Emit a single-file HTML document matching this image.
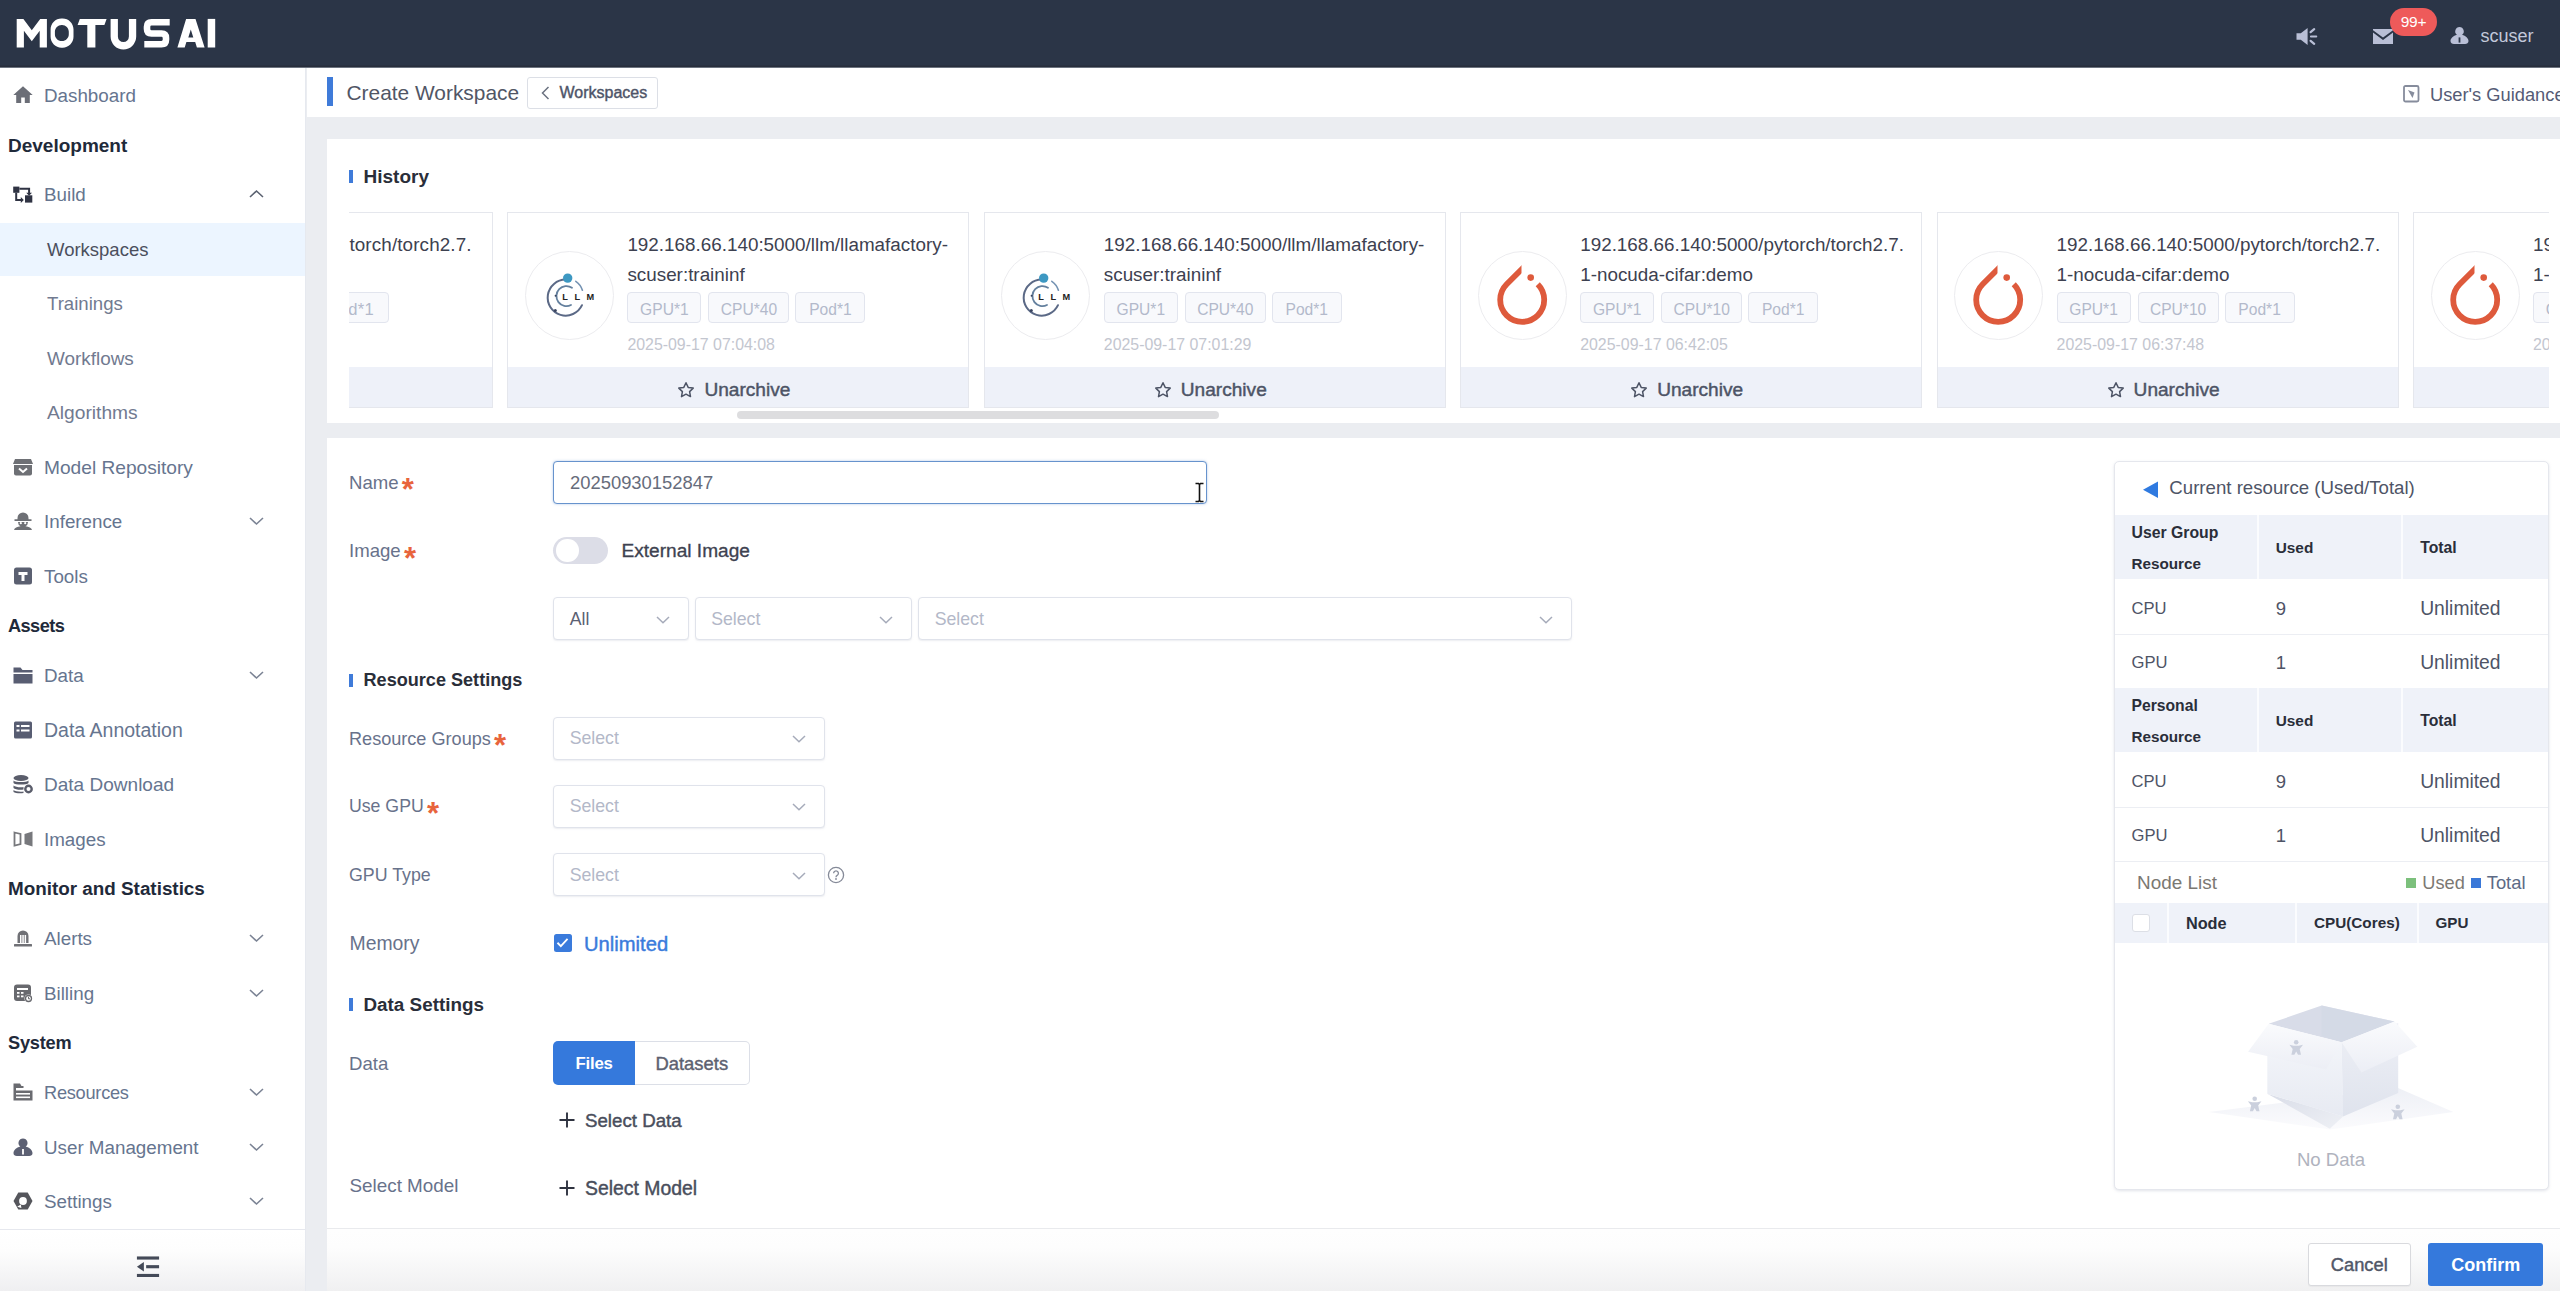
<!DOCTYPE html>
<html>
<head>
<meta charset="utf-8">
<title>Create Workspace</title>
<style>
*{box-sizing:border-box;margin:0;padding:0}
html,body{width:2560px;height:1291px;overflow:hidden;background:#ebedf1}
body{font-family:"Liberation Sans",sans-serif;color:#4e5969;position:relative;font-size:18.8px}
.abs{position:absolute}
.t{position:absolute;white-space:nowrap;line-height:1;transform:translateY(-50%)}
svg{display:block}

/* top bar */
#top{position:absolute;left:0;top:0;width:2560px;height:68px;background:linear-gradient(#2b3547 0,#2b3547 65px,#272d3b 66px,#272d3b 67px,#6d7480 67px,#6d7480 68px);z-index:5}

/* sidebar */
#side{position:absolute;left:0;top:67px;width:306px;height:1224px;background:#fff;border-right:1px solid #e6e9ef}
.mi{position:absolute;left:44px;white-space:nowrap;line-height:1;transform:translateY(-50%);color:#66758f;font-size:18.8px}
.mi.sub{left:47px}
.mh{position:absolute;left:8px;white-space:nowrap;line-height:1;transform:translateY(-50%);color:#1f2a3a;font-weight:700;font-size:19px}
.ic{position:absolute;left:12px;width:22px;height:22px;transform:translateY(-50%)}
.chev{position:absolute;left:249px;width:15px;height:9px;transform:translateY(-50%)}

/* main */
#phead{position:absolute;left:307px;top:67px;width:2253px;height:50px;background:#fff}
#hist{position:absolute;left:327px;top:140px;width:2233px;height:282.500px;background:#fff;box-shadow:0 -1px 0 #fff}
#form{position:absolute;left:327px;top:438px;width:2233px;height:790px;background:#fff}
#foot{position:absolute;left:327px;top:1228px;width:2233px;height:63px;background:linear-gradient(#fefefe 0,#fdfdfd 30%,#f0f0f1 100%);border-top:1px solid #e9eaed}

/* history */
.sec{position:absolute;width:4px;height:13px;background:#3f7bd9}
.sect{position:absolute;white-space:nowrap;line-height:1;transform:translateY(-50%);font-weight:700;color:#2a2e39;font-size:19px}
#cards{position:absolute;left:22px;top:72px;width:2199.800px;height:197px;overflow:hidden}
.card{position:absolute;top:.400px;width:462px;height:195.200px;border:1px solid #e5e7ed;background:#fff}
.card .cf{position:absolute;left:0;right:0;top:153.600px;bottom:0;background:#eef1f9}
.card .circ{position:absolute;left:16.500px;top:37.400px;width:89px;height:89px;border:1.600px solid #ececef;border-radius:50%}
.card .ttl{position:absolute;left:119px;top:16.800px;font-size:18.850px;line-height:30px;color:#3d4150;white-space:nowrap}
.tag{position:absolute;top:78.400px;height:31.400px;padding-top:3.800px;border:1px solid #e2e5ee;border-radius:4px;background:#f8f9fc;color:#b3b9cb;font-size:15.600px;line-height:25.600px;text-align:center}
.card .dt{position:absolute;left:119px;top:131.400px;font-size:15.900px;line-height:1;transform:translateY(-50%);color:#c3c6cf;white-space:nowrap}
.card .ua{position:absolute;left:196px;top:176.300px;font-size:19.100px;line-height:1;transform:translateY(-50%);color:#4d5466;white-space:nowrap;-webkit-text-stroke:.45px #4d5466}
.card .star{position:absolute;left:169px;top:167.300px}

/* form (coords relative to #form at 327,438) */
.sb{-webkit-text-stroke:.42px currentColor}
.lb{position:absolute;left:22px;white-space:nowrap;line-height:1;transform:translateY(-50%);color:#68728b;font-size:18.300px}
.lb i{font-style:normal;color:#e8643c;font-weight:700;font-size:31px;line-height:1;position:absolute;left:100%;margin-left:3.200px;top:50%;margin-top:-8.800px}
.sel{position:absolute;height:43px;border:1px solid #e0e3eb;border-radius:4px;background:#fff;box-shadow:0 1px 1.500px rgba(200,204,216,.35)}
.sel span{position:absolute;left:15.700px;top:calc(50% + 1.300px);transform:translateY(-50%);line-height:1;font-size:17.700px;color:#b3b8c8;white-space:nowrap}
.sel svg{position:absolute;right:18px;top:17.500px}

/* resource panel (origin 2114,461) */
#panel{position:absolute;left:1787px;top:22.500px;width:435px;height:729.500px;border:1px solid #e5e7ed;border-radius:5px;background:#fff;box-shadow:0 1px 3px rgba(150,158,180,.28);overflow:hidden}
#panel .hd{position:absolute;left:0;width:433px;background:#eff2f9}
#panel .vs{position:absolute;width:2px;background:#fbfcfe}
#panel .hl{position:absolute;left:0;width:433px;height:1px;background:#eceef3}
#panel .th{position:absolute;white-space:nowrap;line-height:1;transform:translateY(-50%);font-weight:700;color:#2a2e39;font-size:15.600px}
#panel .td{position:absolute;white-space:nowrap;line-height:1;transform:translateY(-50%);color:#4e5466;font-size:18.500px}
</style>
</head>
<body>

<div id="top">
<svg class="abs" style="left:0;top:0" width="240" height="67" viewBox="0 0 240 67">
 <g fill="#fff">
  <path d="M16.700 47.500V18.900h6.700l8.400 11.300 8.400-11.300h6.700v28.600h-7.200V30.800l-7.900 10.500-7.900-10.500v16.700z"/>
  <path fill-rule="evenodd" d="M61.500 18.400h1.100c6 0 10.900 4.900 10.900 10.900v7.500c0 6-4.900 10.900-10.900 10.900h-1.100c-6 0-10.900-4.900-10.900-10.900v-7.500c0-6 4.900-10.900 10.900-10.900zM61.700 24.900c-3.800 0-6.800 3-6.800 6.800v2.500c0 3.800 3 6.800 6.800 6.800h.300c3.800 0 6.800-3 6.800-6.800v-2.500c0-3.800-3-6.800-6.800-6.800z"/>
  <path d="M79.800 18.900h26.800l-2.200 6.100h-9v22.500h-8.100V25h-9.700z"/>
  <path fill-rule="evenodd" d="M177.400 47.500L186.100 18.900h9.400l9.100 28.600h-7.700l-1.700-5.500h-8.800l-1.700 5.500zM190.800 29.500l2.500 8.100h-5z"/>
  <rect x="207.700" y="18.900" width="7.500" height="28.600"/>
 </g>
 <g fill="none" stroke="#fff">
  <path d="M114.250 18.900V36.600a9.150 9.150 0 0 0 18.300 0V18.900" stroke-width="7.300"/>
  <path d="M169.700 22.200H151.500q-4.500 0-4.500 4.500v2.250q0 4.500 4.500 4.500h10q4.500 0 4.500 4.500v1.800q0 4.450-4.500 4.450H144.300" stroke-width="6.600"/>
 </g>
</svg>
<!-- speaker -->
<svg class="abs" style="left:2296px;top:27px" width="22" height="19" viewBox="0 0 22 19">
 <path fill="#b9bfd6" d="M0.5 6.3h4.3L11.6 1v17L4.8 12.7H0.5z"/>
 <g stroke="#b9bfd6" stroke-width="2.2" stroke-linecap="round"><path d="M15 9.5h5.2M14.6 5.2l3.6-3M14.6 13.8l3.6 3"/></g>
</svg>
<!-- mail -->
<svg class="abs" style="left:2373px;top:29px" width="20" height="15" viewBox="0 0 20 15">
 <path fill="#b9bfd6" d="M0 0h20v1.2L10 8.6 0 1.2zM0 3.4l10 7.5 10-7.5V15H0z"/>
</svg>
<div class="abs" style="left:2390px;top:8px;width:47px;height:28px;border-radius:14px;background:#ee5a5a;color:#fff;font-size:15.5px;line-height:28px;text-align:center;letter-spacing:-0.3px">99+</div>
<!-- user -->
<svg class="abs" style="left:2450px;top:27px" width="19" height="17" viewBox="0 0 19 17">
 <path fill="#b9bfd6" d="M9.5 0a4.3 4.3 0 0 1 2.6 7.7c3.6.9 6.4 3.6 6.4 6.4 0 2-1.6 2.9-3.4 2.9H3.9C2.100 17 .5 16.100 .5 14.100c0-2.800 2.800-5.500 6.400-6.400A4.300 4.300 0 0 1 9.500 0z"/>
 <rect x="8.6" y="10.4" width="1.8" height="5.2" fill="#2b3547"/>
</svg>
<div class="t" style="left:2480.5px;top:36px;color:#c3c8da;font-size:18px">scuser</div>
</div>
<div id="side">
<div class="abs" style="left:0;top:156px;width:305px;height:53px;background:#ecf5ff"></div>
<svg class="ic" style="top:28px;left:12px" width="22" height="22" viewBox="0 0 22 22"><path fill="#6b6e77" d="M11 2.300L1.300 11h2.900v8h5v-5.600h3.600V19h5v-8h2.900z"/></svg><div class="mi" style="top:28.5px;">Dashboard</div>
<div class="mh" style="top:77.8px;">Development</div>
<svg class="ic" style="top:127px;left:12px" width="22" height="22" viewBox="0 0 22 22"><g fill="#2f3343"><rect x="1.200" y="3.600" width="6.200" height="6.200"/><rect x="13" y="12.300" width="7.300" height="7.300"/><path d="M7.400 4.800h10.700v5h1.900l-2.900 3-2.900-3h1.900V6.800H7.400zM3.200 9.800h2v6.200h3.600v-1.900l3 2.900-3 2.900V18H3.200z"/></g></svg><div class="mi" style="top:127.5px;">Build</div><svg class="chev" style="top:127px" width="15" height="9" viewBox="0 0 15 9"><path d="M1 7.500l6.500-6 6.500 6" fill="none" stroke="#5a6170" stroke-width="1.600"/></svg>
<div class="mi sub" style="top:182.5px;color:#4b4f5d;font-size:18.500px">Workspaces</div>
<div class="mi sub" style="top:236.5px;color:#717a90;font-size:18.600px">Trainings</div>
<div class="mi sub" style="top:291.5px;color:#717a90;font-size:18.900px">Workflows</div>
<div class="mi sub" style="top:345.5px;color:#717a90;font-size:19.200px">Algorithms</div>
<svg class="ic" style="top:400px;left:12px" width="22" height="22" viewBox="0 0 22 22"><g fill="#6e7075"><path d="M3 3h16l2 5H1z"/><path d="M2 9h18v8.500a2 2 0 0 1-2 2H4a2 2 0 0 1-2-2z"/></g><path d="M7 12.500l4 3.500 4-3.500" fill="none" stroke="#fff" stroke-width="2"/></svg><div class="mi" style="top:400.5px;font-size:19.150px">Model Repository</div>
<svg class="ic" style="top:454px;left:12px" width="22" height="22" viewBox="0 0 22 22"><g fill="#6e7075"><path d="M5.500 8a5.500 5.500 0 0 1 11 0v1.200h3v1.800h-17V9.200h3z"/><path d="M6 12h10a5 5 0 0 1-2.500 4.300c3.400.4 6 1.700 6.500 3.700H2c.5-2 3.100-3.300 6.500-3.700A5 5 0 0 1 6 12z"/></g><circle cx="8.800" cy="13.200" r="1.100" fill="#fff"/><circle cx="13.200" cy="13.200" r="1.100" fill="#fff"/></svg><div class="mi" style="top:454.5px;">Inference</div><svg class="chev" style="top:454px" width="15" height="9" viewBox="0 0 15 9"><path d="M1 1.500l6.500 6 6.500-6" fill="none" stroke="#7b8394" stroke-width="1.600"/></svg>
<svg class="ic" style="top:509px;left:12px" width="22" height="22" viewBox="0 0 22 22"><rect x="2" y="2.500" width="18" height="17" rx="2.500" fill="#5b6071"/><path d="M6.500 7h9v3h-3v6h-3v-6h-3z" fill="#fff"/></svg><div class="mi" style="top:509.5px;">Tools</div>
<div class="mh" style="top:558.8px;font-size:18.200px;letter-spacing:-.570px">Assets</div>
<svg class="ic" style="top:608px;left:12px" width="22" height="22" viewBox="0 0 22 22"><path fill="#585d72" d="M1.500 3.500h7l2 2.500h10v2.500h-19zM1.500 10h19v9.500h-19z"/></svg><div class="mi" style="top:608.5px;">Data</div><svg class="chev" style="top:608px" width="15" height="9" viewBox="0 0 15 9"><path d="M1 1.500l6.500 6 6.500-6" fill="none" stroke="#7b8394" stroke-width="1.600"/></svg>
<svg class="ic" style="top:663px;left:12px" width="22" height="22" viewBox="0 0 22 22"><rect x="2" y="2.500" width="18" height="17" rx="1.500" fill="#585d72"/><g fill="#fff"><rect x="4.500" y="6" width="3" height="2"/><rect x="9" y="6" width="8.500" height="2"/><rect x="4.500" y="10.500" width="3" height="2"/><rect x="9" y="10.500" width="8.500" height="2"/></g></svg><div class="mi" style="top:663.5px;font-size:19.500px">Data Annotation</div>
<svg class="ic" style="top:717px;left:12px" width="22" height="22" viewBox="0 0 22 22"><g fill="#5a5d6b"><ellipse cx="9" cy="5" rx="7.500" ry="3"/><path d="M1.500 7.500c1.500 2 13.500 2 15 0V10c-1.500 2-13.500 2-15 0zM1.500 12.500c1.500 1.800 8 2 10 1.500v2.500c-3 .6-8.500.3-10-1.500zM1.500 17c1.500 1.600 7 2 10 1.500V20c-3 .6-8.500.3-10-1z"/></g><circle cx="16.500" cy="16" r="3.200" fill="none" stroke="#5a5d6b" stroke-width="2.400"/></svg><div class="mi" style="top:717.5px;font-size:19.050px">Data Download</div>
<svg class="ic" style="top:772px;left:12px" width="22" height="22" viewBox="0 0 22 22"><path d="M2.500 4.500l6 1.500v10l-6 1.500z" fill="none" stroke="#77787c" stroke-width="1.800"/><path d="M20.500 3.500l-8 2.500v10l8 2.500z" fill="#77787c"/></svg><div class="mi" style="top:772.5px;">Images</div>
<div class="mh" style="top:821.8px;font-size:18.850px">Monitor and Statistics</div>
<svg class="ic" style="top:871px;left:12px" width="22" height="22" viewBox="0 0 22 22"><g fill="#707176"><path d="M5.500 16V9a5.500 5.500 0 0 1 11 0v7z"/><rect x="2" y="17" width="18" height="2.500" rx=".5"/></g><g fill="#fff"><rect x="8" y="8" width="1.500" height="8"/><rect x="10.300" y="8" width="1.500" height="8"/><rect x="12.600" y="8" width="1.500" height="8"/></g></svg><div class="mi" style="top:871.5px;">Alerts</div><svg class="chev" style="top:871px" width="15" height="9" viewBox="0 0 15 9"><path d="M1 1.500l6.500 6 6.500-6" fill="none" stroke="#7b8394" stroke-width="1.600"/></svg>
<svg class="ic" style="top:926px;left:12px" width="22" height="22" viewBox="0 0 22 22"><rect x="2" y="2.500" width="17" height="16.500" rx="3" fill="#68696e"/><g fill="#fff"><rect x="5" y="6" width="11" height="2"/><rect x="5" y="10" width="2.500" height="1.800"/><rect x="9" y="10" width="2.500" height="1.800"/><rect x="5" y="13.500" width="2.500" height="1.800"/><rect x="9" y="13.500" width="2.500" height="1.800"/></g><circle cx="16.500" cy="16.500" r="4" fill="#fff"/><circle cx="16.500" cy="16.500" r="3" fill="none" stroke="#68696e" stroke-width="1.300"/><path d="M16.500 14.800v2h1.500" fill="none" stroke="#68696e" stroke-width="1"/></svg><div class="mi" style="top:926.5px;">Billing</div><svg class="chev" style="top:926px" width="15" height="9" viewBox="0 0 15 9"><path d="M1 1.500l6.500 6 6.500-6" fill="none" stroke="#7b8394" stroke-width="1.600"/></svg>
<div class="mh" style="top:975.8px;font-size:18.200px;letter-spacing:-.200px">System</div>
<svg class="ic" style="top:1025px;left:12px" width="22" height="22" viewBox="0 0 22 22"><path fill="#6a6b70" d="M1.500 2.500h6.500l1.500 2.500h2v2h-7.500v2.500h16.500v10h-19z"/><g fill="#fff"><rect x="4" y="12" width="14" height="1.600"/><rect x="4" y="15.500" width="14" height="1.600"/></g></svg><div class="mi" style="top:1025.5px;font-size:18.200px;letter-spacing:-.250px">Resources</div><svg class="chev" style="top:1025px" width="15" height="9" viewBox="0 0 15 9"><path d="M1 1.500l6.500 6 6.500-6" fill="none" stroke="#7b8394" stroke-width="1.600"/></svg>
<svg class="ic" style="top:1080px;left:12px" width="22" height="22" viewBox="0 0 22 22"><path fill="#5c6073" d="M11 2.500a4.500 4.500 0 0 1 2.700 8.100c3.800.900 6.800 3.800 6.800 6.700 0 1.700-1.500 2.700-3.300 2.700H4.800c-1.800 0-3.300-1-3.300-2.700 0-2.900 3-5.800 6.800-6.700A4.500 4.500 0 0 1 11 2.500z"/><rect x="10.100" y="13" width="1.800" height="5.500" fill="#fff"/></svg><div class="mi" style="top:1080.5px;">User Management</div><svg class="chev" style="top:1080px" width="15" height="9" viewBox="0 0 15 9"><path d="M1 1.500l6.500 6 6.500-6" fill="none" stroke="#7b8394" stroke-width="1.600"/></svg>
<svg class="ic" style="top:1134px;left:12px" width="22" height="22" viewBox="0 0 22 22"><path d="M6.300 2.600h9.400l4.800 8.400-4.800 8.400H6.300L1.500 11z" fill="#55565c"/><circle cx="11" cy="11" r="3.900" fill="#fff"/><path d="M5.200 16.800l3.600-2.400.600 3.600z" fill="#fff"/></svg><div class="mi" style="top:1134.5px;">Settings</div><svg class="chev" style="top:1134px" width="15" height="9" viewBox="0 0 15 9"><path d="M1 1.500l6.500 6 6.500-6" fill="none" stroke="#7b8394" stroke-width="1.600"/></svg>
<div class="abs" style="left:0;top:1162px;width:305px;height:62px;background:linear-gradient(#fff 0,#fdfdfd 35%,#efeff1 100%);border-top:1px solid #e6e8ee"></div>
<svg class="abs" style="left:135.500px;top:1188.500px" width="24" height="21.500" viewBox="0 0 26 24" preserveAspectRatio="none"><g fill="#444a58"><rect x="1" y=".500" width="24" height="3.500"/><rect x="11" y="10.200" width="14" height="3.500"/><rect x="1" y="20" width="24" height="3.500"/><path d="M1 12l7.500-5.200v10.400z"/></g></svg>
</div>
<div id="phead">
<div class="abs" style="left:20px;top:10px;width:6px;height:29px;background:#3f7bd9"></div>
<div class="t" style="left:39.500px;top:26px;font-size:20.900px;color:#515665">Create Workspace</div>
<div class="abs" style="left:220px;top:9.500px;width:131px;height:32px;border:1px solid #dcdfe6;border-radius:3px;background:#fff"></div>
<svg class="abs" style="left:234px;top:19px" width="9" height="14" viewBox="0 0 9 14"><path d="M7.5 1L1.5 7l6 6" fill="none" stroke="#6b7280" stroke-width="1.5"/></svg>
<div class="t" style="left:252.500px;top:26px;font-size:16px;color:#4e5468;-webkit-text-stroke:.4px #4e5468">Workspaces</div>
<svg class="abs" style="left:2096px;top:18px" width="17" height="18" viewBox="0 0 17 18"><rect x="1" y="1" width="14.500" height="15.500" rx="1.500" fill="none" stroke="#868c9c" stroke-width="1.800"/><path d="M5 5l6.500 2.500-2 5.500z" fill="#868c9c"/></svg>
<div class="t" style="left:2123px;top:27.500px;font-size:18.300px;color:#555b75">User's Guidance</div>
</div>
<div id="hist">
<div class="sec" style="left:22px;top:29.500px"></div><div class="sect" style="left:36.500px;top:36px">History</div>
<div id="cards">
<div class="card" style="left:-318.0px">
<div class="ttl" style="left:317.400px;letter-spacing:.12px">torch/torch2.7.</div>
<div class="tag" style="left:287px;width:69.500px;text-align:right;padding-right:13.500px;font-size:16.600px;letter-spacing:.3px">d*1</div>
<div class="cf"></div>
</div>
<div class="card" style="left:158.4px">
<div class="circ"><svg class="abs" style="left:0;top:0" width="89" height="89" viewBox="0 0 89 89">
<g fill="none" stroke-linecap="round">
<path d="M39.800 27.600A18 18 0 1 0 56 53.200" stroke="#5b6986" stroke-width="2"/>
<path d="M49.800 29.300q5 3.400 6.600 9" stroke="#7593b3" stroke-width="1.600"/>
<path d="M46 35.800A10 10 0 1 0 45 53" stroke="#64809e" stroke-width="1.800"/>
</g>
<circle cx="41.700" cy="26.100" r="4.700" fill="#3d98c2"/>
<circle cx="29.300" cy="58.500" r="1.500" fill="#3a4560"/><circle cx="29.600" cy="43.800" r="1" fill="#3a4560"/>
<text x="36.200" y="47.500" font-family="Liberation Sans" font-weight="700" font-size="9.200" letter-spacing="6.600" fill="#222">LLM</text>
</svg></div>
<div class="ttl">192.168.66.140:5000/llm/llamafactory-<br>scuser:traininf</div>
<div class="tag" style="left:119px;width:74px">GPU*1</div><div class="tag" style="left:200px;width:81px">CPU*40</div><div class="tag" style="left:287px;width:70px">Pod*1</div>
<div class="dt">2025-09-17 07:04:08</div>
<div class="cf"></div><svg class="star" width="18" height="18" viewBox="0 0 18 18"><path d="M9 1.800l2.200 4.600 5 .700-3.600 3.500.900 5-4.500-2.400-4.500 2.400.900-5L1.800 7.100l5-.700z" fill="none" stroke="#4d5466" stroke-width="1.500" stroke-linejoin="round"/></svg><div class="ua">Unarchive</div>
</div>
<div class="card" style="left:634.8px">
<div class="circ"><svg class="abs" style="left:0;top:0" width="89" height="89" viewBox="0 0 89 89">
<g fill="none" stroke-linecap="round">
<path d="M39.800 27.600A18 18 0 1 0 56 53.200" stroke="#5b6986" stroke-width="2"/>
<path d="M49.800 29.300q5 3.400 6.600 9" stroke="#7593b3" stroke-width="1.600"/>
<path d="M46 35.800A10 10 0 1 0 45 53" stroke="#64809e" stroke-width="1.800"/>
</g>
<circle cx="41.700" cy="26.100" r="4.700" fill="#3d98c2"/>
<circle cx="29.300" cy="58.500" r="1.500" fill="#3a4560"/><circle cx="29.600" cy="43.800" r="1" fill="#3a4560"/>
<text x="36.200" y="47.500" font-family="Liberation Sans" font-weight="700" font-size="9.200" letter-spacing="6.600" fill="#222">LLM</text>
</svg></div>
<div class="ttl">192.168.66.140:5000/llm/llamafactory-<br>scuser:traininf</div>
<div class="tag" style="left:119px;width:74px">GPU*1</div><div class="tag" style="left:200px;width:81px">CPU*40</div><div class="tag" style="left:287px;width:70px">Pod*1</div>
<div class="dt">2025-09-17 07:01:29</div>
<div class="cf"></div><svg class="star" width="18" height="18" viewBox="0 0 18 18"><path d="M9 1.800l2.200 4.600 5 .700-3.600 3.500.900 5-4.500-2.400-4.500 2.400.900-5L1.800 7.100l5-.700z" fill="none" stroke="#4d5466" stroke-width="1.500" stroke-linejoin="round"/></svg><div class="ua">Unarchive</div>
</div>
<div class="card" style="left:1111.2px">
<div class="circ"><svg class="abs" style="left:0;top:0" width="89" height="89" viewBox="0 0 89 89">
<defs><clipPath id="CP3"><rect x="0" y="0" width="43.800" height="89"/><rect x="43.800" y="30" width="46" height="59"/></clipPath></defs>
<g transform="translate(-1.300,-1.400)"><path d="M48 14.600L28.940 33.640A22 22 0 1 0 60.060 33.640" fill="none" stroke="#de5a3c" stroke-width="5.800" clip-path="url(#CP3)"/>
<circle cx="53" cy="27" r="3.300" fill="#de5a3c"/>
</g></svg></div>
<div class="ttl">192.168.66.140:5000/pytorch/torch2.7.<br>1-nocuda-cifar:demo</div>
<div class="tag" style="left:119px;width:74px">GPU*1</div><div class="tag" style="left:200px;width:81px">CPU*10</div><div class="tag" style="left:287px;width:70px">Pod*1</div>
<div class="dt">2025-09-17 06:42:05</div>
<div class="cf"></div><svg class="star" width="18" height="18" viewBox="0 0 18 18"><path d="M9 1.800l2.200 4.600 5 .700-3.600 3.500.900 5-4.500-2.400-4.500 2.400.900-5L1.800 7.100l5-.700z" fill="none" stroke="#4d5466" stroke-width="1.500" stroke-linejoin="round"/></svg><div class="ua">Unarchive</div>
</div>
<div class="card" style="left:1587.6px">
<div class="circ"><svg class="abs" style="left:0;top:0" width="89" height="89" viewBox="0 0 89 89">
<defs><clipPath id="CP4"><rect x="0" y="0" width="43.800" height="89"/><rect x="43.800" y="30" width="46" height="59"/></clipPath></defs>
<g transform="translate(-1.300,-1.400)"><path d="M48 14.600L28.940 33.640A22 22 0 1 0 60.060 33.640" fill="none" stroke="#de5a3c" stroke-width="5.800" clip-path="url(#CP4)"/>
<circle cx="53" cy="27" r="3.300" fill="#de5a3c"/>
</g></svg></div>
<div class="ttl">192.168.66.140:5000/pytorch/torch2.7.<br>1-nocuda-cifar:demo</div>
<div class="tag" style="left:119px;width:74px">GPU*1</div><div class="tag" style="left:200px;width:81px">CPU*10</div><div class="tag" style="left:287px;width:70px">Pod*1</div>
<div class="dt">2025-09-17 06:37:48</div>
<div class="cf"></div><svg class="star" width="18" height="18" viewBox="0 0 18 18"><path d="M9 1.800l2.200 4.600 5 .700-3.600 3.500.900 5-4.500-2.400-4.500 2.400.900-5L1.800 7.100l5-.700z" fill="none" stroke="#4d5466" stroke-width="1.500" stroke-linejoin="round"/></svg><div class="ua">Unarchive</div>
</div>
<div class="card" style="left:2064.0px">
<div class="circ"><svg class="abs" style="left:0;top:0" width="89" height="89" viewBox="0 0 89 89">
<defs><clipPath id="CP5"><rect x="0" y="0" width="43.800" height="89"/><rect x="43.800" y="30" width="46" height="59"/></clipPath></defs>
<g transform="translate(-1.300,-1.400)"><path d="M48 14.600L28.940 33.640A22 22 0 1 0 60.060 33.640" fill="none" stroke="#de5a3c" stroke-width="5.800" clip-path="url(#CP5)"/>
<circle cx="53" cy="27" r="3.300" fill="#de5a3c"/>
</g></svg></div>
<div class="ttl">192.168.66.140:5000/pytorch/torch2.7.<br>1-nocuda-cifar:demo</div>
<div class="tag" style="left:119px;width:74px">GPU*1</div><div class="tag" style="left:200px;width:81px">CPU*10</div><div class="tag" style="left:287px;width:70px">Pod*1</div>
<div class="dt">2025-09-17 06:30:12</div>
<div class="cf"></div><svg class="star" width="18" height="18" viewBox="0 0 18 18"><path d="M9 1.800l2.200 4.600 5 .700-3.600 3.500.900 5-4.500-2.400-4.500 2.400.900-5L1.800 7.100l5-.700z" fill="none" stroke="#4d5466" stroke-width="1.500" stroke-linejoin="round"/></svg><div class="ua">Unarchive</div>
</div>
</div>
<div class="abs" style="left:410px;top:271px;width:482px;height:8px;border-radius:4px;background:#dddddf"></div>
</div>
<div id="form">
<div class="lb" style="top:44.5px;font-size:18.6px;">Name<i>*</i></div>
<div class="abs" style="left:226px;top:22.500px;width:654px;height:43px;border:1.600px solid #6793cd;border-radius:4px;background:#fff;box-shadow:0 0 2.500px rgba(103,147,205,.55)"></div>
<div class="t" style="left:243px;top:44.500px;font-size:18.400px;color:#666c7b">20250930152847</div>
<svg class="abs" style="left:867px;top:44px" width="11" height="21" viewBox="0 0 11 21"><path d="M1.500 1.500h3l1 1 1-1h3M5.500 2.500v16M1.500 19.500h3l1-1 1 1h3" fill="none" stroke="#111" stroke-width="1.600"/></svg>
<div class="lb" style="top:113px;font-size:18.6px;">Image<i>*</i></div>
<div class="abs" style="left:226px;top:98.500px;width:55px;height:27.500px;border-radius:14px;background:#dcdde7"></div><div class="abs" style="left:229px;top:101px;width:22.500px;height:22.500px;border-radius:50%;background:#fff"></div>
<div class="t sb" style="left:294.500px;top:113px;font-size:19.100px;color:#3e4250;-webkit-text-stroke-width:.32px">External Image</div>
<div class="sel" style="left:226px;top:159px;width:136px"><span style="color:#5b6173">All</span><svg width="14" height="8" viewBox="0 0 14 8"><path d="M1 1l6 5.800L13 1" fill="none" stroke="#a6abba" stroke-width="1.500"/></svg></div>
<div class="sel" style="left:367.500px;top:159px;width:217.500px"><span>Select</span><svg width="14" height="8" viewBox="0 0 14 8"><path d="M1 1l6 5.800L13 1" fill="none" stroke="#a6abba" stroke-width="1.500"/></svg></div>
<div class="sel" style="left:591px;top:159px;width:654px"><span>Select</span><svg width="14" height="8" viewBox="0 0 14 8"><path d="M1 1l6 5.800L13 1" fill="none" stroke="#a6abba" stroke-width="1.500"/></svg></div>
<div class="sec" style="left:22px;top:235.500px"></div><div class="sect" style="left:36.500px;top:242px;font-size:18.100px">Resource Settings</div>
<div class="lb" style="top:300.5px;font-size:18.1px;">Resource Groups<i>*</i></div>
<div class="sel" style="left:226px;top:278.7px;width:272px"><span>Select</span><svg width="14" height="8" viewBox="0 0 14 8"><path d="M1 1l6 5.800L13 1" fill="none" stroke="#a6abba" stroke-width="1.500"/></svg></div>
<div class="lb" style="top:369px;font-size:17.700px;">Use GPU<i>*</i></div>
<div class="sel" style="left:226px;top:346.7px;width:272px"><span>Select</span><svg width="14" height="8" viewBox="0 0 14 8"><path d="M1 1l6 5.800L13 1" fill="none" stroke="#a6abba" stroke-width="1.500"/></svg></div>
<div class="lb" style="top:437.800px;font-size:17.800px;">GPU Type</div>
<div class="sel" style="left:226px;top:415.2px;width:272px"><span>Select</span><svg width="14" height="8" viewBox="0 0 14 8"><path d="M1 1l6 5.800L13 1" fill="none" stroke="#a6abba" stroke-width="1.500"/></svg></div>
<svg class="abs" style="left:499.500px;top:428px" width="18" height="18" viewBox="0 0 18 18"><circle cx="9" cy="9" r="7.600" fill="none" stroke="#858a98" stroke-width="1.300"/><path d="M6.600 7.300a2.400 2.400 0 1 1 3.600 2.100c-.800.500-1.200.900-1.200 1.800" fill="none" stroke="#858a98" stroke-width="1.300"/><circle cx="9" cy="13" r=".900" fill="#858a98"/></svg>
<div class="lb" style="top:505.800px;font-size:19.400px;left:22.500px">Memory</div>
<div class="abs" style="left:226.800px;top:495.800px;width:18.400px;height:18.400px;border-radius:2.500px;background:#3a7bdc"></div><svg class="abs" style="left:229.200px;top:499.300px" width="13.500" height="11.500" viewBox="0 0 14 12"><path d="M1.500 6l3.500 3.500L12 2" fill="none" stroke="#fff" stroke-width="1.900"/></svg>
<div class="t sb" style="left:257px;top:505.500px;font-size:20.200px;color:#3a7bdc;-webkit-text-stroke-width:.42px">Unlimited</div>
<div class="sec" style="left:22px;top:559.500px"></div><div class="sect" style="left:36.500px;top:566.500px;font-size:18.850px">Data Settings</div>
<div class="lb" style="top:625.600px;font-size:18.600px;">Data</div>
<div class="abs" style="left:307px;top:603px;width:116px;height:43.500px;border:1px solid #dcdfe7;border-left:0;border-radius:0 5px 5px 0;background:#fff"></div>
<div class="abs" style="left:226px;top:603px;width:81.500px;height:43.500px;border-radius:5px 0 0 5px;background:#3579dc"></div>
<div class="t" style="left:248.500px;top:625.700px;font-size:16.800px;color:#fff;font-weight:700;letter-spacing:-.2px">Files</div>
<div class="t sb" style="left:328.500px;top:625.500px;font-size:18.400px;color:#5d6170;-webkit-text-stroke-width:.4px">Datasets</div>
<svg class="abs" style="left:232px;top:674px" width="16" height="16" viewBox="0 0 16 16"><path d="M8 .500v15M.500 8h15" stroke="#2f3340" stroke-width="1.900"/></svg>
<div class="t sb" style="left:258px;top:682.500px;font-size:18.700px;color:#494e5c">Select Data</div>
<div class="lb" style="top:747.500px;font-size:18.850px;left:22.500px">Select Model</div>
<svg class="abs" style="left:232px;top:742px" width="16" height="16" viewBox="0 0 16 16"><path d="M8 .500v15M.500 8h15" stroke="#2f3340" stroke-width="1.900"/></svg>
<div class="t sb" style="left:258px;top:750.500px;font-size:19.400px;color:#494e5c">Select Model</div>
<div id="panel">
<svg class="abs" style="left:26.5px;top:18.5px" width="17" height="19" viewBox="0 0 17 19"><path d="M16 1.500v16.500L1 9.800z" fill="#2f7ae0"/></svg>
<div class="td" style="left:54.3px;top:26.8px;font-size:18.65px">Current resource (Used/Total)</div>
<div class="hd" style="top:53.3px;height:64.4px"></div>
<div class="vs" style="left:142.3px;top:53.3px;height:64.4px"></div>
<div class="vs" style="left:286.1px;top:53.3px;height:64.4px"></div>
<div class="th" style="left:16.5px;top:71.0px;font-size:15.8px">User Group</div>
<div class="th" style="left:16.5px;top:102.0px;font-size:15.250px">Resource</div>
<div class="th" style="left:160.7px;top:86.0px;font-size:15.4px">Used</div>
<div class="th" style="left:305.2px;top:86.0px;font-size:15.8px">Total</div>
<div class="td" style="left:16.5px;top:147.3px;font-size:16.600px">CPU</div>
<div class="td" style="left:160.7px;top:147.3px">9</div>
<div class="td" style="left:305.2px;top:147.3px;font-size:19.3px">Unlimited</div>
<div class="hl" style="top:172.0px"></div>
<div class="td" style="left:16.5px;top:201.7px;font-size:16.600px">GPU</div>
<div class="td" style="left:160.7px;top:201.7px">1</div>
<div class="td" style="left:305.2px;top:201.7px;font-size:19.3px">Unlimited</div>
<div class="hd" style="top:226.5px;height:64.4px"></div>
<div class="vs" style="left:142.3px;top:226.5px;height:64.4px"></div>
<div class="vs" style="left:286.1px;top:226.5px;height:64.4px"></div>
<div class="th" style="left:16.5px;top:244.2px;font-size:15.7px">Personal</div>
<div class="th" style="left:16.5px;top:275.2px;font-size:15.250px">Resource</div>
<div class="th" style="left:160.7px;top:259.2px;font-size:15.4px">Used</div>
<div class="th" style="left:305.2px;top:259.2px;font-size:15.8px">Total</div>
<div class="td" style="left:16.5px;top:320.5px;font-size:16.600px">CPU</div>
<div class="td" style="left:160.7px;top:320.5px">9</div>
<div class="td" style="left:305.2px;top:320.5px;font-size:19.3px">Unlimited</div>
<div class="hl" style="top:345.3px"></div>
<div class="td" style="left:16.5px;top:374.9px;font-size:16.600px">GPU</div>
<div class="td" style="left:160.7px;top:374.9px">1</div>
<div class="td" style="left:305.2px;top:374.9px;font-size:19.3px">Unlimited</div>
<div class="hl" style="top:399.7px"></div>
<div class="td" style="left:22.1px;top:421.5px;font-size:18.9px;color:#7b7872">Node List</div>
<div class="abs" style="left:291.1px;top:416.8px;width:10px;height:10px;background:#7cc07c"></div>
<div class="td" style="left:307.3px;top:421.5px;font-size:18.2px;color:#7b7872">Used</div>
<div class="abs" style="left:355.6px;top:416.8px;width:10px;height:10px;background:#3a78d8"></div>
<div class="td" style="left:371.7px;top:421.5px;font-size:18.4px;color:#5d6a86">Total</div>
<div class="hd" style="top:441.1px;height:40.3px"></div>
<div class="vs" style="left:51.7px;top:441.1px;height:40.3px"></div>
<div class="vs" style="left:180.2px;top:441.1px;height:40.3px"></div>
<div class="vs" style="left:302.2px;top:441.1px;height:40.3px"></div>
<div class="abs" style="left:16.5px;top:452.4px;width:18px;height:18px;border:1px solid #dcdfe6;border-radius:3px;background:#fff"></div>
<div class="th" style="left:70.9px;top:461.8px;font-size:16.3px">Node</div>
<div class="th" style="left:198.9px;top:461.8px;font-size:15.3px">CPU(Cores)</div>
<div class="th" style="left:320.5px;top:461.8px;font-size:15.2px">GPU</div>
<svg class="abs" style="left:75.0px;top:528.0px" width="280" height="150" viewBox="0 0 280 150">
<defs>
<linearGradient id="gA" x1="0" y1="0" x2="0" y2="1"><stop offset="0" stop-color="#f4f6fa"/><stop offset="1" stop-color="#e7eaf2"/></linearGradient>
<linearGradient id="gB" x1="0" y1="0" x2="0" y2="1"><stop offset="0" stop-color="#eef0f6"/><stop offset="1" stop-color="#dfe3ed"/></linearGradient>
<linearGradient id="gG" x1="0" y1="0" x2="0" y2="1"><stop offset="0" stop-color="#eef0f6"/><stop offset="1" stop-color="#fbfbfd"/></linearGradient>
<linearGradient id="gS" x1="0" y1="0" x2="1" y2="1"><stop offset="0" stop-color="#d9dde8"/><stop offset="1" stop-color="#eef0f5"/></linearGradient>
<linearGradient id="gF" x1="0" y1="0" x2="0" y2="1"><stop offset="0" stop-color="#fafbfd"/><stop offset="1" stop-color="#eceef5"/></linearGradient>
</defs>
<path d="M19 122L208 98l55.400 24L140 139.500z" fill="url(#gG)"/>
<path d="M77.300 103.700L153 126.500l-13.200 12.300z" fill="url(#gS)"/>
<path d="M78.700 33.800L131.700 15.500 204.500 31.600 151.600 52.200z" fill="#d8dce8"/>
<path d="M131.700 15.500L204.500 31.600 151.600 52.200 131.700 46z" fill="#d3d8e5" opacity=".7"/>
<path d="M77.300 44L151.600 52.200 153 126.500 77.300 103.700z" fill="url(#gA)"/>
<path d="M151.600 52.200L208.200 33v70L153 126.500z" fill="url(#gB)"/>
<path d="M78.700 33.800L151.600 52.200 136.100 79.500 58.100 61.800z" fill="url(#gF)"/>
<path d="M151.600 52.200L204.500 31.600 227.300 56.700 171.400 82.400z" fill="url(#gF)"/>
<g fill="#cbd0dd"><g transform="translate(106.200,56.500)"><circle cx="0" cy="-4.300" r="2.300"/><path d="M-6.800-1.800l4.300 1h5l4.300-1-3.300 4.200 1.300 5.900-3-.100-1.800-3.200-1.800 3.200-3 .100 1.300-5.900z"/></g><g transform="translate(64.700,113)"><circle cx="0" cy="-4.300" r="2.300"/><path d="M-6.800-1.800l4.300 1h5l4.300-1-3.300 4.200 1.300 5.900-3-.100-1.800-3.200-1.800 3.200-3 .100 1.300-5.900z"/></g><g transform="translate(207.800,121)"><circle cx="0" cy="-4.300" r="2.300"/><path d="M-6.800-1.800l4.300 1h5l4.300-1-3.300 4.200 1.300 5.900-3-.100-1.800-3.200-1.800 3.200-3 .100 1.300-5.900z"/></g></g>
</svg>
<div class="td" style="left:181.9px;top:698.3px;font-size:18.6px;color:#b0b3be">No Data</div>
</div>
</div>
<div id="foot">
<div class="abs" style="left:1981px;top:14px;width:103px;height:43px;border:1px solid #d9dade;border-radius:3px;background:#fff;box-shadow:0 1px 1px rgba(0,0,0,.04)"></div>
<div class="t sb" style="left:2003.800px;top:36.400px;font-size:18.300px;color:#515767">Cancel</div>
<div class="abs" style="left:2101px;top:14px;width:115px;height:43px;border-radius:3px;background:#3579dc"></div>
<div class="t" style="left:2124.200px;top:36.400px;font-size:18px;color:#fff;font-weight:700">Confirm</div>
</div>

</body>
</html>
